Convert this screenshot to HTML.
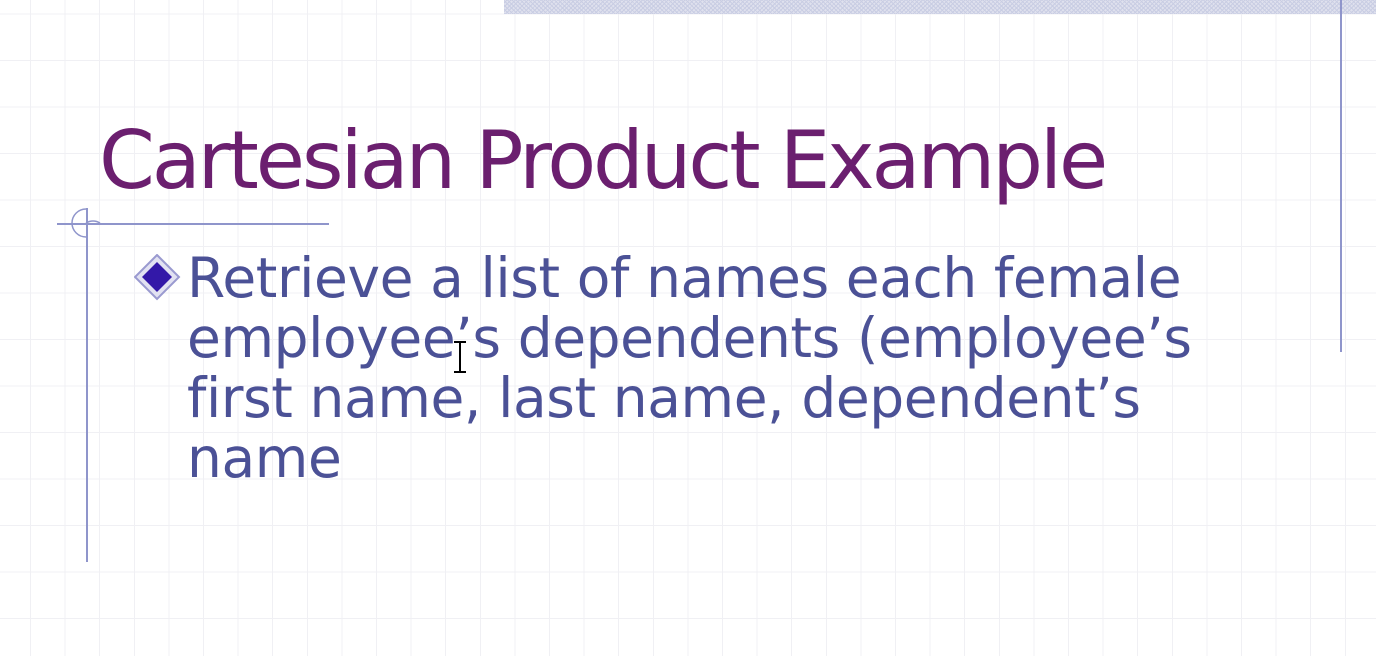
<!DOCTYPE html>
<html><head><style>
html,body{margin:0;padding:0;}
body{width:1376px;height:656px;position:relative;overflow:hidden;background:#fff;
background-image:repeating-linear-gradient(90deg,transparent 0 30px,#f0f0f4 30px 31px,transparent 31px 34.6px),
repeating-linear-gradient(0deg,transparent 0 37px,#f0f0f4 37px 38px,transparent 38px 46.5px);}
.band{position:absolute;left:504px;top:0;width:872px;height:14px;background:#dfe1ee;
background-image:repeating-linear-gradient(45deg,#c9cde3 0 1px,transparent 1px 3px),repeating-linear-gradient(-45deg,#c9cde3 0 1px,transparent 1px 3px);}
.l{position:absolute;background:#8f95cb;}
.t{position:absolute;left:99px;top:114px;font-family:"DejaVu Sans",Verdana,sans-serif;font-size:80px;color:#6b1f6f;white-space:nowrap;letter-spacing:-3.1px;}
.b{position:absolute;left:187px;top:248px;font-family:"DejaVu Sans",Verdana,sans-serif;font-size:55px;line-height:60px;color:#4b5196;white-space:nowrap;letter-spacing:-0.4px;}
</style></head><body>
<div class="band"></div>
<div class="l" style="left:1340px;top:0;width:2px;height:352px"></div>
<div class="l" style="left:86px;top:208px;width:1.5px;height:354px"></div>
<div class="l" style="left:57px;top:223px;width:272px;height:1.5px"></div>
<svg style="position:absolute;left:70px;top:207px" width="34" height="34"><path d="M16 2 A13 13 0 0 0 16 30" fill="none" stroke="#8f95cb" stroke-width="1.5"/><path d="M16 16 A13 13 0 0 1 16 30" fill="none" stroke="#8f95cb" stroke-width="1.5" transform="rotate(-90 16 16)"/></svg>
<div class="t">Cartesian Product Example</div>
<svg style="position:absolute;left:134px;top:254px" width="48" height="48"><polygon points="23,1 45,23 23,45 1,23" fill="#e2e2f2" stroke="#9a9ad0" stroke-width="2"/><polygon points="23,8 38,23 23,38 8,23" fill="#3318a8"/></svg>
<div class="b">Retrieve a list of names each female<br>employee’s dependents (employee’s<br>first name, last name, dependent’s<br>name</div>
<svg style="position:absolute;left:450px;top:340px" width="20" height="36"><path d="M4 2h12M10 2v30M4 32h12" stroke="#000" stroke-width="2" fill="none"/></svg>
</body></html>
